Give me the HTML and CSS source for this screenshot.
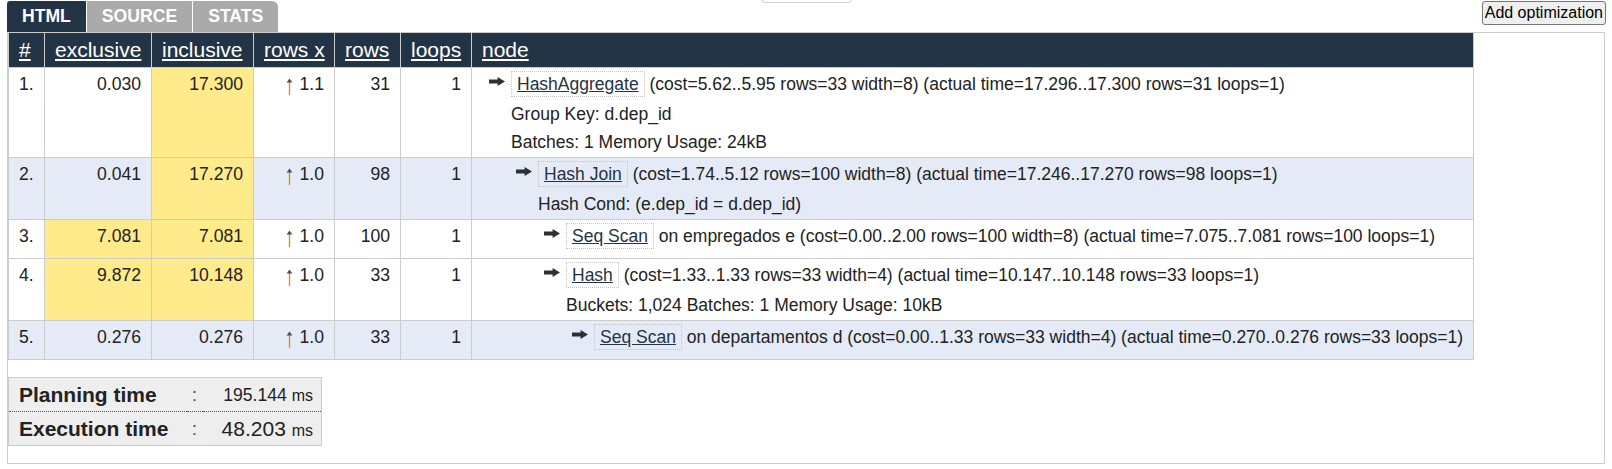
FILE: index.html
```html
<!DOCTYPE html>
<html>
<head>
<meta charset="utf-8">
<title>explain</title>
<link rel="stylesheet" href="styles.css">
</head>
<body>
<div class="topbar">
  <ul class="tabs">
    <li class="tab active">HTML</li>
    <li class="tab">SOURCE</li>
    <li class="tab last">STATS</li>
  </ul>
  <div class="ghost"></div>
  <button class="add-opt" type="button">Add optimization</button>
</div>
<div class="box">
  <table class="plan">
    <colgroup>
      <col class="c-num"><col class="c-excl"><col class="c-incl"><col class="c-rx"><col class="c-rows"><col class="c-loops"><col class="c-node">
    </colgroup>
    <thead>
      <tr><th><a>#</a></th><th><a>exclusive</a></th><th><a>inclusive</a></th><th><a>rows x</a></th><th><a>rows</a></th><th><a>loops</a></th><th><a>node</a></th></tr>
    </thead>
    <tbody>
      <tr class="odd">
        <td>1.</td><td class="r">0.030</td><td class="r hot">17.300</td><td class="r"><svg class="up" viewBox="0 0 7 17"><path class="up-shaft" d="M3.5 17V3"/><path class="up-head" d="M0.6 4.6L3.5 0.4L6.4 4.6Z"/></svg> 1.1</td><td class="r">31</td><td class="r">1</td>
        <td class="node"><div class="n l0"><div class="head"><svg class="arr" viewBox="0 0 16 9"><path d="M0 2.6H8.6V0L16 4.5L8.6 9V6.4H0Z"/></svg><span class="nname"><a>HashAggregate</a></span> (cost=5.62..5.95 rows=33 width=8) (actual time=17.296..17.300 rows=31 loops=1)</div><div class="details"><div>Group Key: d.dep_id</div><div>Batches: 1 Memory Usage: 24kB</div></div></div></td>
      </tr>
      <tr class="even">
        <td>2.</td><td class="r">0.041</td><td class="r hot">17.270</td><td class="r"><svg class="up" viewBox="0 0 7 17"><path class="up-shaft" d="M3.5 17V3"/><path class="up-head" d="M0.6 4.6L3.5 0.4L6.4 4.6Z"/></svg> 1.0</td><td class="r">98</td><td class="r">1</td>
        <td class="node"><div class="n l1"><div class="head"><svg class="arr" viewBox="0 0 16 9"><path d="M0 2.6H8.6V0L16 4.5L8.6 9V6.4H0Z"/></svg><span class="nname"><a>Hash Join</a></span> (cost=1.74..5.12 rows=100 width=8) (actual time=17.246..17.270 rows=98 loops=1)</div><div class="details"><div>Hash Cond: (e.dep_id = d.dep_id)</div></div></div></td>
      </tr>
      <tr class="odd">
        <td>3.</td><td class="r hot">7.081</td><td class="r hot">7.081</td><td class="r"><svg class="up" viewBox="0 0 7 17"><path class="up-shaft" d="M3.5 17V3"/><path class="up-head" d="M0.6 4.6L3.5 0.4L6.4 4.6Z"/></svg> 1.0</td><td class="r">100</td><td class="r">1</td>
        <td class="node"><div class="n l2"><div class="head"><svg class="arr" viewBox="0 0 16 9"><path d="M0 2.6H8.6V0L16 4.5L8.6 9V6.4H0Z"/></svg><span class="nname"><a>Seq Scan</a></span> on empregados e (cost=0.00..2.00 rows=100 width=8) (actual time=7.075..7.081 rows=100 loops=1)</div></div></td>
      </tr>
      <tr class="odd">
        <td>4.</td><td class="r hot">9.872</td><td class="r hot">10.148</td><td class="r"><svg class="up" viewBox="0 0 7 17"><path class="up-shaft" d="M3.5 17V3"/><path class="up-head" d="M0.6 4.6L3.5 0.4L6.4 4.6Z"/></svg> 1.0</td><td class="r">33</td><td class="r">1</td>
        <td class="node"><div class="n l2"><div class="head"><svg class="arr" viewBox="0 0 16 9"><path d="M0 2.6H8.6V0L16 4.5L8.6 9V6.4H0Z"/></svg><span class="nname"><a>Hash</a></span> (cost=1.33..1.33 rows=33 width=4) (actual time=10.147..10.148 rows=33 loops=1)</div><div class="details"><div>Buckets: 1,024 Batches: 1 Memory Usage: 10kB</div></div></div></td>
      </tr>
      <tr class="even">
        <td>5.</td><td class="r">0.276</td><td class="r">0.276</td><td class="r"><svg class="up" viewBox="0 0 7 17"><path class="up-shaft" d="M3.5 17V3"/><path class="up-head" d="M0.6 4.6L3.5 0.4L6.4 4.6Z"/></svg> 1.0</td><td class="r">33</td><td class="r">1</td>
        <td class="node"><div class="n l3"><div class="head"><svg class="arr" viewBox="0 0 16 9"><path d="M0 2.6H8.6V0L16 4.5L8.6 9V6.4H0Z"/></svg><span class="nname"><a>Seq Scan</a></span> on departamentos d (cost=0.00..1.33 rows=33 width=4) (actual time=0.270..0.276 rows=33 loops=1)</div></div></td>
      </tr>
    </tbody>
  </table>

  <table class="summary">
    <tr class="first"><th>Planning time</th><td class="colon">:</td><td class="val">195.144 <span class="ms">ms</span></td></tr>
    <tr><th>Execution time</th><td class="colon">:</td><td class="val big">48.203 <span class="ms">ms</span></td></tr>
  </table>
</div>
</body>
</html>
```

FILE: styles.css
```css
* { box-sizing: border-box; }

body {
  margin: 0;
  padding: 0 7px;
  font-family: "Liberation Sans", Arial, sans-serif;
  font-size: 17.6px;
  color: #222;
  background: #fff;
}

.topbar {
  position: relative;
  display: flex;
  align-items: flex-start;
  justify-content: space-between;
  height: 32px;
  padding-top: 1px;
}

.tabs {
  display: flex;
  gap: 1px;
  list-style: none;
  margin: 0;
  padding: 0;
}

.tab {
  height: 31px;
  line-height: 31px;
  padding: 0 15px;
  background: #aaaaaa;
  color: #fff;
  font-weight: bold;
}

.tab.active {
  background: #243447;
  border-top-left-radius: 3px;
}

.tab.last {
  border-top-right-radius: 6px;
}

.ghost {
  position: absolute;
  left: 754px;
  top: -20px;
  width: 91px;
  height: 23px;
  border: 1px solid #d0d0d0;
  border-radius: 4px;
}

.add-opt {
  margin-right: -1px;
  height: 24px;
  padding: 1px 2px;
  font-family: "Liberation Sans", Arial, sans-serif;
  font-size: 16px;
  color: #000;
  background: #efefef;
  border: 1px solid #767676;
  border-radius: 3px;
}

.box {
  border: 1px solid #ccc;
}

.plan {
  border-collapse: collapse;
  table-layout: fixed;
  width: 1465px;
}

.c-num { width: 36px; }
.c-excl { width: 107px; }
.c-incl { width: 102px; }
.c-rx { width: 81px; }
.c-rows { width: 66px; }
.c-loops { width: 71px; }
.c-node { width: 1002px; }

.plan th {
  background: #243447;
  color: #fff;
  font-weight: normal;
  font-size: 21px;
  line-height: 24px;
  padding: 5px 10px;
  text-align: left;
  border-left: 1px solid #ccc;
  border-right: 1px solid #ccc;
  white-space: nowrap;
}

.plan th a {
  color: #fff;
  text-decoration: underline;
}

.plan td {
  vertical-align: top;
  padding: 3px 10px 9px;
  line-height: 26px;
  border: 1px solid #ccc;
  white-space: nowrap;
}

.plan tr.odd td { background: #fff; }
.plan tr.even td { background: #e4ebf7; }
.plan tr td.hot { background: #ffeb8b; }

.plan td.r { text-align: right; }

.up {
  width: 7px;
  height: 17px;
  margin-right: 2px;
  vertical-align: -5px;
}

.up-shaft {
  stroke: #dc8f28;
  stroke-width: 1.4;
  fill: none;
}

.up-head {
  fill: #4a4f5a;
}

.plan td.node {
  font-size: 17.5px;
}

.n.l0 { margin-left: 7px; }
.n.l1 { margin-left: 34px; }
.n.l2 { margin-left: 62px; }
.n.l3 { margin-left: 90px; }

.arr {
  width: 16px;
  height: 9px;
  margin-right: 6px;
  vertical-align: 4px;
  fill: #2b2f36;
}

.nname {
  display: inline-block;
  border: 1px dotted #c4c4c4;
  padding: 0 5px;
  line-height: 24px;
}

.nname a {
  color: #233345;
  text-decoration: underline;
}

.details {
  margin: 2.5px 0 -7.5px;
  padding-left: 22px;
  line-height: 28px;
}

.summary {
  margin: 17px 0;
  border-collapse: collapse;
  background: #eee;
  border: 1px solid #ccc;
  width: 314px;
}

.summary th {
  width: 178px;
  padding: 5px 0 4px 10px;
  text-align: left;
  font-size: 21px;
  line-height: 24px;
  font-weight: bold;
  color: #222;
  white-space: nowrap;
}

.summary td {
  padding: 5px 0 4px;
  line-height: 24px;
  white-space: nowrap;
}

.summary tr.first th,
.summary tr.first td {
  border-bottom: 1px dotted #555;
}

.summary .colon {
  width: 16px;
  text-align: center;
  color: #444;
}

.summary .val {
  text-align: right;
  padding-right: 8px;
  font-size: 17.6px;
}

.summary .val.big {
  font-size: 21px;
}

.summary .ms {
  font-size: 16px;
  line-height: 16px;
}
```
